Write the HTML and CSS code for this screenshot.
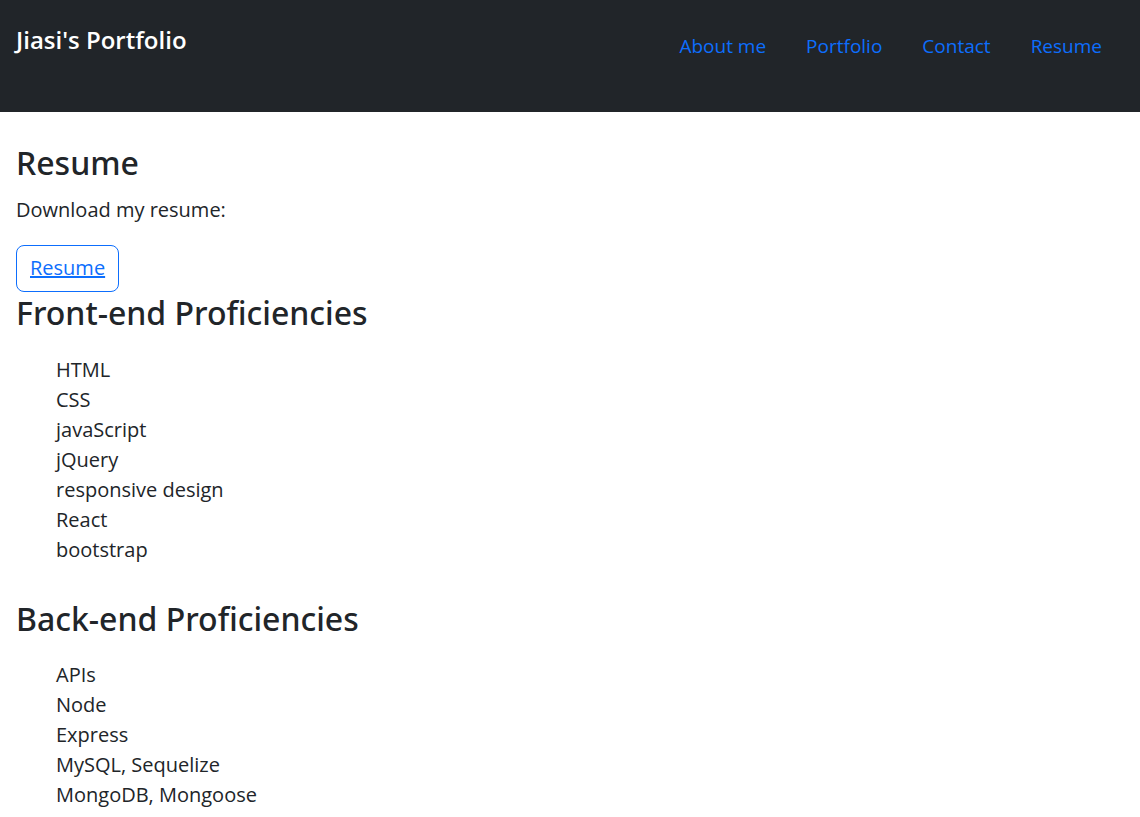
FILE: index.html
```html
<!DOCTYPE html>
<html lang="en">
<head>
<meta charset="utf-8">
<title>Jiasi's Portfolio</title>
<link rel="stylesheet" href="styles.css">
</head>
<body>
<nav class="navbar">
  <a class="brand" href="#">Jiasi's Portfolio</a>
  <ul class="nav-links">
    <li><a href="#">About me</a></li>
    <li><a href="#">Portfolio</a></li>
    <li><a href="#">Contact</a></li>
    <li><a href="#">Resume</a></li>
  </ul>
</nav>
<main class="content">
  <h2 class="title">Resume</h2>
  <p class="lead-text">Download my resume:</p>
  <div class="btn-outline"><a href="#">Resume</a></div>
  <h2 class="section-title">Front-end Proficiencies</h2>
  <ul class="skills">
    <li>HTML</li>
    <li>CSS</li>
    <li>javaScript</li>
    <li>jQuery</li>
    <li>responsive design</li>
    <li>React</li>
    <li>bootstrap</li>
  </ul>
  <h2 class="section-title">Back-end Proficiencies</h2>
  <ul class="skills">
    <li>APIs</li>
    <li>Node</li>
    <li>Express</li>
    <li>MySQL, Sequelize</li>
    <li>MongoDB, Mongoose</li>
  </ul>
</main>
</body>
</html>
```
FILE: styles.css
```css
* { box-sizing: border-box; }
body {
  margin: 0;
  font-family: "Open Sans", "Noto Sans", sans-serif;
  font-size: 20px;
  line-height: 1.5;
  color: #212529;
  background: #fff;
}
a { color: #0d6efd; }
.navbar {
  background: #212529;
  height: 112px;
  padding: 0 18px 0 16px;
  display: flex;
  justify-content: space-between;
  align-items: flex-start;
}
.brand {
  color: #fff;
  text-decoration: none;
  font-size: 24px;
  font-weight: 600;
  line-height: 1.2;
  margin-top: 26px;
}
.nav-links {
  list-style: none;
  margin: 31px 0 0;
  padding: 0;
  display: flex;
}
.nav-links a {
  display: block;
  padding: 0 20px;
  font-size: 19px;
  line-height: 30px;
  text-decoration: none;
  color: #0d6efd;
}
.content { padding: 0 16px; }
.title,
.section-title {
  font-family: "Noto Sans", "Open Sans", sans-serif;
  font-size: 32px;
  font-weight: 500;
  line-height: 1.2;
}
.title { margin: 32px 0 13px; }
.lead-text { margin: 0 0 20px; }
.btn-outline {
  display: inline-block;
  border: 1px solid #0d6efd;
  border-radius: 8px;
  padding: 7px 13px 8px;
  line-height: 30px;
}
.section-title { margin: 2px 0 22px; }
.skills {
  list-style: none;
  margin: 0 0 35px;
  padding-left: 40px;
}
.skills li { line-height: 30px; }
```
